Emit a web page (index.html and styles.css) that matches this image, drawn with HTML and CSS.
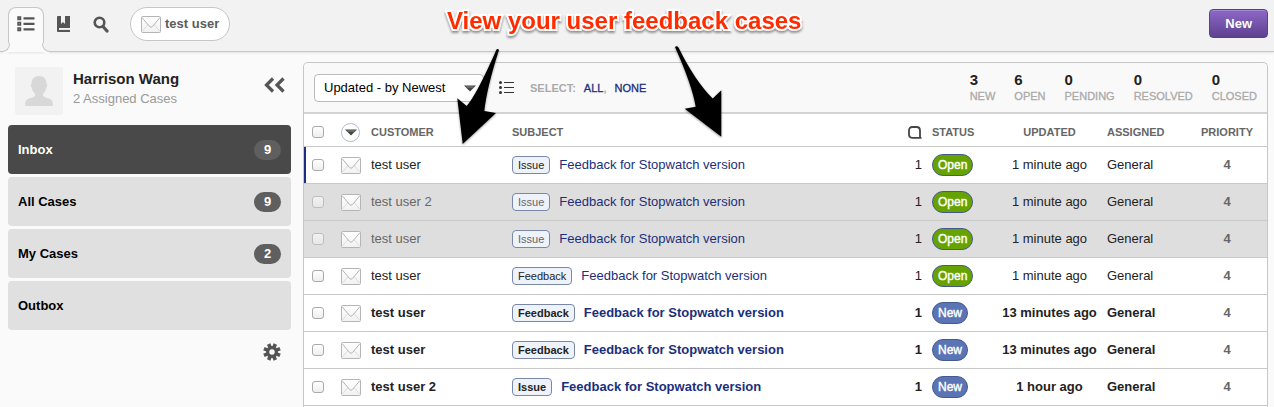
FILE: index.html
```html
<!DOCTYPE html>
<html lang="en">
<head>
<meta charset="utf-8">
<title>Inbox</title>
<link rel="stylesheet" href="styles.css">
</head>
<body>
<svg class="defs" aria-hidden="true">
  <defs>
    <linearGradient id="paper" x1="0" y1="0" x2="0" y2="1">
      <stop offset="0" stop-color="#fff"/><stop offset="1" stop-color="#f1f1f1"/>
    </linearGradient>
    <symbol id="mail" viewBox="0 0 20 17">
      <rect x=".5" y=".5" width="19" height="16" rx="1" fill="url(#paper)" stroke="#b5b5b5"/>
      <path d="M1 15.5 7 8.5M19 15.5 13 8.5" fill="none" stroke="#ddd"/>
      <path d="M1 1.500 8.500 10.500Q10 12 11.500 10.500L19 1.500" fill="none" stroke="#b5b5b5"/>
    </symbol>
    <symbol id="caret" viewBox="0 0 12 7">
      <path d="M0 .5H12L6 6.500Z" fill="#444"/><path d="M2.500 2H9.500" stroke="#888"/>
    </symbol>
  </defs>
</svg>

<header class="topbar">
  <nav class="tabs">
    <button class="tab active" aria-label="Cases">
      <svg width="18" height="16" viewBox="0 0 18 16"><g fill="#999" stroke="#555" stroke-width="1.500"><path d="M1 1h2.500v2.500H1zM1 6.500h2.500v2.500H1zM1 12h2.500v2.500H1z"/></g><path d="M6.500 2.300H17.500M6.500 7.800H17.500M6.500 13.300H17.500" stroke="#555" stroke-width="2.200"/></svg>
    </button>
    <button class="tab" aria-label="Library">
      <svg width="13" height="16" viewBox="0 0 13 16"><path d="M1 0H4V8L6 6 8 8V0H13V12H2V13H13V16H1Q0 16 0 15V1Q0 0 1 0Z" fill="#555"/><path d="M2 13.500H13" stroke="#e8e8e8"/></svg>
    </button>
    <button class="tab" aria-label="Search">
      <svg width="16" height="17" viewBox="0 0 16 17"><circle cx="6.500" cy="6.500" r="4.800" fill="none" stroke="#555" stroke-width="2.600"/><path d="M10 10.500 14 15" stroke="#555" stroke-width="3.200" stroke-linecap="round"/></svg>
    </button>
  </nav>
  <a class="pill" href="#"><svg width="20" height="17"><use href="#mail"/></svg>test user</a>
  <button class="new">New</button>
</header>

<main class="page">
  <aside class="sidebar">
    <div class="profile">
      <svg class="avatar" width="48" height="48" viewBox="0 0 48 48"><rect width="48" height="48" rx="3" fill="#f2f2f2"/><path d="M24 9C29 9 31.500 12 31.500 17Q33 18 31.500 20.500 30.500 25 28 27V29Q30 30.500 34 31.500 38 33 38 37.500 38 39 36 39H12Q10 39 10 37.500 10 33 14 31.500 18 30.500 20 29V27Q17.500 25 16.500 20.500 15 18 16.500 17C16.500 12 19 9 24 9Z" fill="#d8d8d8"/></svg>
      <div class="who"><strong>Harrison Wang</strong><span>2 Assigned Cases</span></div>
      <button class="plain" aria-label="Collapse"><svg width="21" height="16" viewBox="0 0 21 16"><path d="M9 1.500 2.500 8 9 14.500M19.500 1.500 13 8 19.500 14.500" fill="none" stroke="#555" stroke-width="3.200"/></svg></button>
    </div>
    <nav class="boxes">
      <a class="box current" href="#">Inbox<span class="badge">9</span></a>
      <a class="box" href="#">All Cases<span class="badge">9</span></a>
      <a class="box" href="#">My Cases<span class="badge">2</span></a>
      <a class="box" href="#">Outbox</a>
    </nav>
    <button class="plain gear" aria-label="Settings"><svg width="18" height="18" viewBox="-9 -9 18 18"><g stroke="#555" stroke-width="3.600"><path d="M0-8.700V8.700" transform="rotate(22.500)"/><path d="M0-8.700V8.700" transform="rotate(67.500)"/><path d="M0-8.700V8.700" transform="rotate(112.500)"/><path d="M0-8.700V8.700" transform="rotate(157.500)"/></g><circle r="6" fill="#555"/><circle r="2.700" fill="#fafafa"/></svg></button>
  </aside>

  <section class="panel">
    <div class="toolbar">
      <div class="sort">
        <select aria-label="Sort cases"><option>Updated - by Newest</option></select>
        <svg width="12" height="7"><use href="#caret"/></svg>
      </div>
      <svg class="lines" width="15" height="13" viewBox="0 0 15 13"><g fill="#333"><circle cx="1.500" cy="1.500" r="1.500"/><circle cx="1.500" cy="6.500" r="1.500"/><circle cx="1.500" cy="11.500" r="1.500"/><path d="M5 1h10v1H5zM5 6h10v1H5zM5 11h10v1H5z"/></g></svg>
      <div class="select"><span>SELECT:</span><span><a href="#">ALL</a>,</span><a href="#">NONE</a></div>
      <dl class="stats">
        <div><dt>NEW</dt><dd>3</dd></div>
        <div><dt>OPEN</dt><dd>6</dd></div>
        <div><dt>PENDING</dt><dd>0</dd></div>
        <div><dt>RESOLVED</dt><dd>0</dd></div>
        <div><dt>CLOSED</dt><dd>0</dd></div>
      </dl>
    </div>
    <table class="cases">
      <colgroup><col class="c-check"><col class="c-icon"><col class="c-customer"><col><col class="c-count"><col class="c-status"><col class="c-updated"><col class="c-assigned"><col class="c-priority"></colgroup>
      <thead>
        <tr>
          <th><input type="checkbox" aria-label="Select all"></th>
          <th><button class="filter" aria-label="Filter by channel"><svg width="12" height="7"><use href="#caret"/></svg></button></th>
          <th>CUSTOMER</th><th>SUBJECT</th>
          <th class="right"><svg width="14" height="13" viewBox="0 0 14 13"><path d="M13.500 11.800H4Q1 11.800 1 8.500V4.500Q1 1 4.500 1H8.500Q12 1 12 4.500V11.500" fill="none" stroke="#444" stroke-width="1.800"/></svg></th>
          <th>STATUS</th><th class="center">UPDATED</th><th>ASSIGNED</th><th class="center">PRIORITY</th>
        </tr>
      </thead>
      <tbody>
        <tr class="focus"><td><input type="checkbox" aria-label="Select case"></td><td><svg width="20" height="17"><use href="#mail"/></svg></td><td>test user</td><td><span class="tag">Issue</span><a href="#">Feedback for Stopwatch version</a></td><td class="right">1</td><td><span class="status open">Open</span></td><td class="center">1 minute ago</td><td>General</td><td class="center priority">4</td></tr>
        <tr class="seen"><td><input type="checkbox" aria-label="Select case"></td><td><svg width="20" height="17"><use href="#mail"/></svg></td><td class="dim">test user 2</td><td><span class="tag">Issue</span><a href="#">Feedback for Stopwatch version</a></td><td class="right">1</td><td><span class="status open">Open</span></td><td class="center">1 minute ago</td><td>General</td><td class="center priority">4</td></tr>
        <tr class="seen"><td><input type="checkbox" aria-label="Select case"></td><td><svg width="20" height="17"><use href="#mail"/></svg></td><td class="dim">test user</td><td><span class="tag">Issue</span><a href="#">Feedback for Stopwatch version</a></td><td class="right">1</td><td><span class="status open">Open</span></td><td class="center">1 minute ago</td><td>General</td><td class="center priority">4</td></tr>
        <tr><td><input type="checkbox" aria-label="Select case"></td><td><svg width="20" height="17"><use href="#mail"/></svg></td><td>test user</td><td><span class="tag">Feedback</span><a href="#">Feedback for Stopwatch version</a></td><td class="right">1</td><td><span class="status open">Open</span></td><td class="center">1 minute ago</td><td>General</td><td class="center priority">4</td></tr>
        <tr class="unread"><td><input type="checkbox" aria-label="Select case"></td><td><svg width="20" height="17"><use href="#mail"/></svg></td><td>test user</td><td><span class="tag">Feedback</span><a href="#">Feedback for Stopwatch version</a></td><td class="right">1</td><td><span class="status">New</span></td><td class="center">13 minutes ago</td><td>General</td><td class="center priority">4</td></tr>
        <tr class="unread"><td><input type="checkbox" aria-label="Select case"></td><td><svg width="20" height="17"><use href="#mail"/></svg></td><td>test user</td><td><span class="tag">Feedback</span><a href="#">Feedback for Stopwatch version</a></td><td class="right">1</td><td><span class="status">New</span></td><td class="center">13 minutes ago</td><td>General</td><td class="center priority">4</td></tr>
        <tr class="unread"><td><input type="checkbox" aria-label="Select case"></td><td><svg width="20" height="17"><use href="#mail"/></svg></td><td>test user 2</td><td><span class="tag">Issue</span><a href="#">Feedback for Stopwatch version</a></td><td class="right">1</td><td><span class="status">New</span></td><td class="center">1 hour ago</td><td>General</td><td class="center priority">4</td></tr>
      </tbody>
    </table>
  </section>
</main>

<p class="callout">View your user feedback cases</p>
<svg class="arrows" width="280" height="106" viewBox="450 42 280 106" aria-hidden="true">
  <path d="M496.500 49.500Q498 48.500 499 50Q487 87 484.300 111L496 113 462.700 144 457.300 98.300 466.700 106Q477 94 496.500 49.500Z"/>
  <path d="M675 47Q677 45.500 678.500 47.500Q695 81 712.700 98.500L721.300 90.300V136.700L684.700 108.700 695.700 106.700Q692 85 675 47Z"/>
</svg>
</body>
</html>
```

FILE: styles.css
```css
* { box-sizing: border-box; }
body {
  margin: 0;
  min-height: 100vh;
  display: flex;
  flex-direction: column;
  overflow: hidden;
  position: relative;
  background: #fafafa;
  color: #222;
  font: 13px/16px "Liberation Sans", Arial, sans-serif;
}
button, select, input { font: inherit; margin: 0; }
button { cursor: pointer; }
a { color: #1b2f7c; text-decoration: none; }
svg { display: block; }
.defs { position: absolute; width: 0; height: 0; }

.topbar {
  display: flex;
  align-items: flex-start;
  height: 52px;
  padding: 7px 6px 0 8px;
  background: #f2f2f2;
  border-bottom: 1px solid #c6c6c6;
  box-shadow: 0 1px 2px #e4e4e4;
}
.tabs { display: flex; }
.tab {
  position: relative;
  display: flex;
  justify-content: center;
  width: 38px;
  height: 45px;
  padding: 8px 0 0;
  border: 1px solid transparent;
  border-bottom: 0;
  background: none;
}
.tab.active {
  width: 36px;
  background: #fafafa;
  border-color: #c6c6c6;
  border-radius: 8px 8px 0 0;
}
.tab.active::before, .tab.active::after {
  content: "";
  position: absolute;
  bottom: 0;
  width: 8px;
  height: 8px;
  border: 0 solid #c6c6c6;
  background: #f2f2f2;
}
.tab.active::before {
  left: -8px;
  border-width: 0 1px 1px 0;
  border-bottom-right-radius: 8px;
  box-shadow: 2px 2px #fafafa;
}
.tab.active::after {
  right: -8px;
  border-width: 0 0 1px 1px;
  border-bottom-left-radius: 8px;
  box-shadow: -2px 2px #fafafa;
}
.pill {
  display: flex;
  align-items: center;
  gap: 4px;
  height: 34px;
  margin-left: 10px;
  padding: 0 10px;
  border: 1px solid #c6c6c6;
  border-radius: 17px;
  background: #fff;
  color: #5c5c5c;
  font-weight: bold;
}
.new {
  height: 29px;
  margin: 2px 0 0 auto;
  padding: 0 15px;
  border: 1px solid #58408a;
  border-radius: 4px;
  background: linear-gradient(#8d68c6, #5d4190);
  box-shadow: inset 0 1px #a486d4;
  color: #fff;
  font-weight: bold;
}

.page { display: flex; flex: 1; gap: 12px; padding: 10px 6px 0 8px; }
.sidebar { width: 283px; display: flex; flex-direction: column; }
.plain { padding: 0; border: 0; background: none; }
.profile { display: flex; padding: 5px 6px 10px 7px; }
.who { flex: 1; display: flex; flex-direction: column; gap: 4px; padding: 4px 0 0 10px; color: #999; }
.who strong { color: #222; font-size: 15px; }
.profile .plain { align-self: flex-start; padding-top: 10px; }
.boxes { display: flex; flex-direction: column; gap: 3px; }
.box {
  display: flex;
  align-items: center;
  justify-content: space-between;
  height: 49px;
  padding: 0 10px;
  border-radius: 4px;
  background: #e0e0e0;
  color: #000;
  font-weight: bold;
}
.box.current { background: #494949; color: #fff; }
.badge {
  width: 27px;
  border-radius: 10px;
  background: #5f5f5f;
  color: #fff;
  line-height: 20px;
  text-align: center;
}
.gear { align-self: flex-end; margin: 13px 10px 0 0; }

.panel {
  flex: 1;
  min-width: 0;
  border: 1px solid #c6c6c6;
  border-bottom: 0;
  border-radius: 5px 5px 0 0;
  background: #fff;
}
.toolbar {
  display: flex;
  align-items: center;
  height: 51px;
  padding: 0 10px;
  border-bottom: 2px solid #d3d3d3;
  border-radius: 5px 5px 0 0;
  background: #f9f9f9;
}
.sort { position: relative; width: 170px; }
.sort select {
  width: 100%;
  height: 28px;
  padding: 0 9px;
  appearance: none;
  border: 1px solid #bbb;
  border-radius: 4px;
  background: #fff;
  color: #000;
}
.sort svg { position: absolute; right: 8px; top: 11px; pointer-events: none; }
.lines { margin-left: 15px; }
.select { display: flex; gap: 8px; margin-left: 16px; color: #aaa; font-size: 11px; -webkit-text-stroke: 0.3px; }
.select span:first-child { font-weight: bold; -webkit-text-stroke: 0; }
.stats { display: flex; gap: 19px; margin: 0 0 0 auto; color: #aaa; font-size: 11px; -webkit-text-stroke: 0.3px; }
.stats div { display: flex; flex-direction: column-reverse; }
.stats dd { margin: 0; color: #222; font-size: 15px; font-weight: bold; -webkit-text-stroke: 0; }

.cases { width: 100%; table-layout: fixed; border-collapse: separate; border-spacing: 0; }
.c-check { width: 32px; }
.c-icon { width: 30px; }
.c-customer { width: 141px; }
.c-count { width: 31px; }
.c-status { width: 70px; }
.c-updated { width: 105px; }
.c-assigned { width: 85px; }
.c-priority { width: 80px; }
.cases th, .cases td {
  height: 37px;
  padding: 0 5px;
  border-bottom: 1px solid #c9c9c9;
  text-align: left;
  vertical-align: middle;
  white-space: nowrap;
}
.cases th { height: 33px; padding-top: 4px; color: #666; font-size: 11px; }
.cases th:first-child, .cases td:first-child { padding-left: 8px; }
.cases .right { text-align: right; }
.cases th.right svg { margin-left: auto; }
.cases .center { text-align: center; }
.cases input {
  display: block;
  width: 12px;
  height: 12px;
  appearance: none;
  border: 1px solid #aaa;
  border-radius: 3px;
  background: linear-gradient(#fff, #eee);
}
.filter {
  display: flex;
  align-items: center;
  justify-content: center;
  width: 19px;
  height: 19px;
  padding: 0;
  border: 1px solid #b5bcd0;
  border-radius: 50%;
  background: #fff;
}
.focus td:first-child { box-shadow: inset 2px 0 #1b2f7c; }
.seen { background: #dedede; }
.seen input { opacity: .6; }
.seen .dim, .seen .tag { color: #666; }
.unread { font-weight: bold; }
.tag {
  display: inline-block;
  margin-right: 9px;
  padding: 0 5px;
  border: 1px solid #7a88a8;
  border-radius: 4px;
  background: #eef2fa;
  font-size: 11px;
}
.status {
  display: inline-block;
  padding: 0 5px;
  border: 1px solid #46598c;
  border-radius: 11px;
  background: #5a74b5;
  color: #fff;
  font-size: 12px;
  line-height: 20px;
  font-weight: normal;
  -webkit-text-stroke: 0.4px #fff;
}
.status.open { background: #67a300; }
.cases .priority { color: #666; font-weight: bold; }

.callout {
  position: absolute;
  left: 447px;
  top: 7px;
  margin: 0;
  color: #ff2c00;
  font-size: 24px;
  font-weight: bold;
  line-height: 28px;
  white-space: nowrap;
  -webkit-text-stroke: 4px #fff;
  paint-order: stroke fill;
  filter: drop-shadow(0 2px 1px rgb(0 0 0 / 40%));
}
.arrows { position: absolute; left: 450px; top: 42px; pointer-events: none; filter: drop-shadow(0 1px 1px rgb(0 0 0 / 40%)); }
```
